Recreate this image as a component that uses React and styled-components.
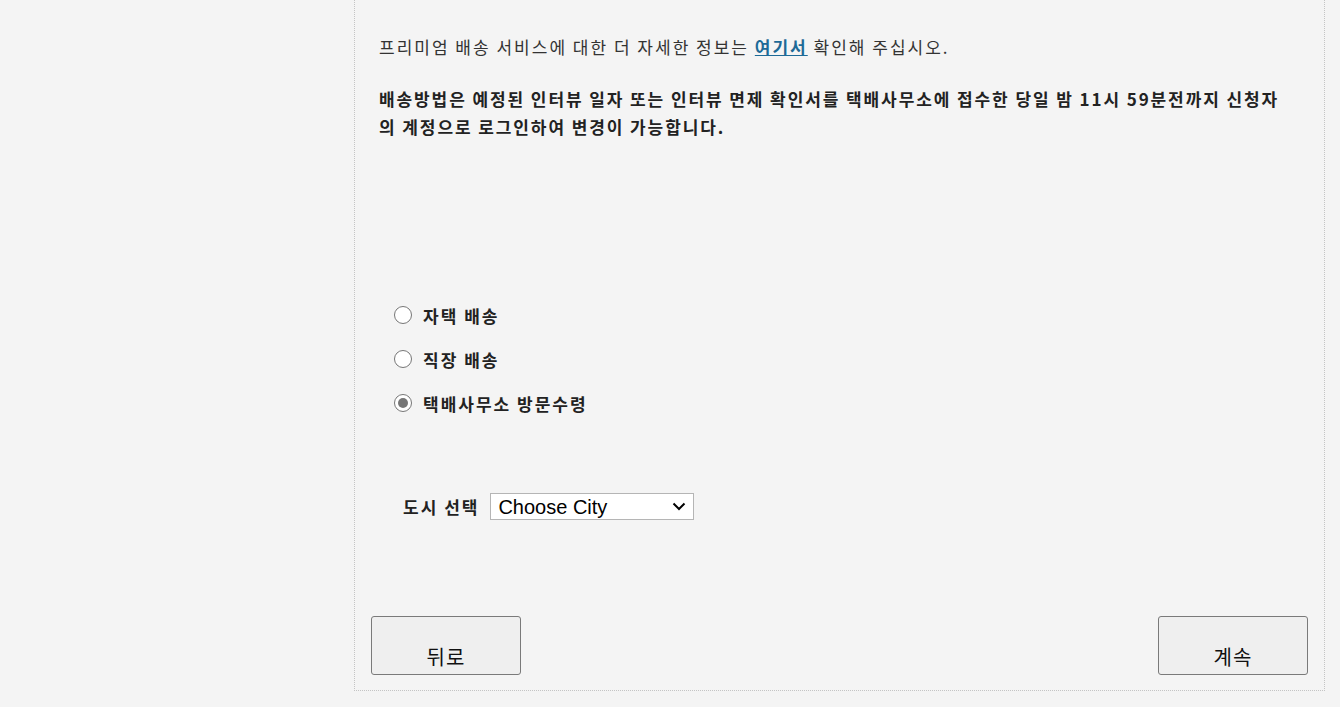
import React, { useState } from 'react';
import styled, { createGlobalStyle } from 'styled-components';

const GlobalStyle = createGlobalStyle`
  html, body {
    margin: 0;
    padding: 0;
    background: #f4f4f4;
  }
  body {
    font-family: "Noto Sans CJK KR", "Liberation Sans", sans-serif;
    color: #222;
  }
`;

const Page = styled.div`
  width: 1340px;
  height: 707px;
  overflow: hidden;
`;

const Panel = styled.div`
  margin-left: 354px;
  width: 969px;
  height: 690px;
  border-left: 1px dotted #c4c4c4;
  border-right: 1px dotted #c4c4c4;
  border-bottom: 1px dotted #c4c4c4;
  display: flex;
  flex-direction: column;
`;

const Info = styled.div`
  padding: 33px 24px 0 24px;
`;

const Note = styled.p`
  margin: 0;
  font-size: 17px;
  letter-spacing: 2px;
  line-height: 28px;
  color: #333;
`;

const Link = styled.a`
  color: #1d6a97;
  font-weight: bold;
  text-decoration: underline;
`;

const Bold = styled.p`
  margin: 24px 0 0;
  font-size: 17px;
  letter-spacing: 1.9px;
  font-weight: bold;
  line-height: 28px;
  color: #222;
  white-space: nowrap;
`;

const Options = styled.div`
  margin-top: 165px;
  padding-left: 39px;
  display: flex;
  flex-direction: column;
  gap: 26px;
`;

const Option = styled.label`
  display: flex;
  align-items: center;
  gap: 11px;
  font-size: 17px;
  letter-spacing: 2px;
  font-weight: bold;
  color: #222;
  height: 18px;
  cursor: pointer;
`;

const Radio = styled.input`
  appearance: none;
  margin: 0;
  width: 18px;
  height: 18px;
  border: 1.5px solid #767676;
  border-radius: 50%;
  background: #fff;
  display: grid;
  place-items: center;
  &::after {
    content: '';
    width: 10px;
    height: 10px;
    border-radius: 50%;
    background: ${p => (p.checked ? '#767676' : 'transparent')};
  }
`;

const CityRow = styled.div`
  margin-top: 81px;
  padding-left: 48px;
  display: flex;
  align-items: center;
  gap: 11px;
`;

const CityLabel = styled.span`
  font-size: 17px;
  letter-spacing: 2px;
  font-weight: bold;
  color: #222;
`;

const Select = styled.select`
  width: 204px;
  height: 27px;
  border: 1px solid #b5b5b5;
  background: #fff;
  font-family: "Liberation Sans", Arial, sans-serif;
  font-size: 20px;
  color: #000;
  padding: 0 7px;
  appearance: none;
  background-image: url("data:image/svg+xml,%3Csvg xmlns='http://www.w3.org/2000/svg' width='14' height='9' viewBox='0 0 14 9'%3E%3Cpath d='M1.5 1.5 L7 7 L12.5 1.5' fill='none' stroke='%23000' stroke-width='2'/%3E%3C/svg%3E");
  background-repeat: no-repeat;
  background-position: right 7px center;
`;

const Footer = styled.div`
  margin-top: auto;
  padding: 0 16px 15px 16px;
  display: flex;
  justify-content: space-between;
`;

const Button = styled.button`
  width: 150px;
  height: 59px;
  border: 1px solid #7a7a7a;
  border-radius: 3px;
  background: #efefef;
  font-family: "Noto Sans CJK KR", "Liberation Sans", sans-serif;
  font-size: 20px;
  letter-spacing: 1px;
  color: #111;
  padding-top: 22px;
`;

const options = ['자택 배송', '직장 배송', '택배사무소 방문수령'];

export default function App() {
  const [method, setMethod] = useState(2);

  return (
    <Page>
      <GlobalStyle />
      <Panel>
        <Info>
          <Note>
            프리미엄 배송 서비스에 대한 더 자세한 정보는 <Link href="#">여기서</Link> 확인해 주십시오.
          </Note>
          <Bold>
            배송방법은 예정된 인터뷰 일자 또는 인터뷰 면제 확인서를 택배사무소에 접수한 당일 밤 11시 59분전까지 신청자
            <br />
            의 계정으로 로그인하여 변경이 가능합니다.
          </Bold>
        </Info>
        <Options>
          {options.map((o, i) => (
            <Option key={o}>
              <Radio
                type="radio"
                name="method"
                checked={method === i}
                onChange={() => setMethod(i)}
              />
              {o}
            </Option>
          ))}
        </Options>
        <CityRow>
          <CityLabel>도시 선택</CityLabel>
          <Select defaultValue="">
            <option value="">Choose City</option>
          </Select>
        </CityRow>
        <Footer>
          <Button>뒤로</Button>
          <Button>계속</Button>
        </Footer>
      </Panel>
    </Page>
  );
}
